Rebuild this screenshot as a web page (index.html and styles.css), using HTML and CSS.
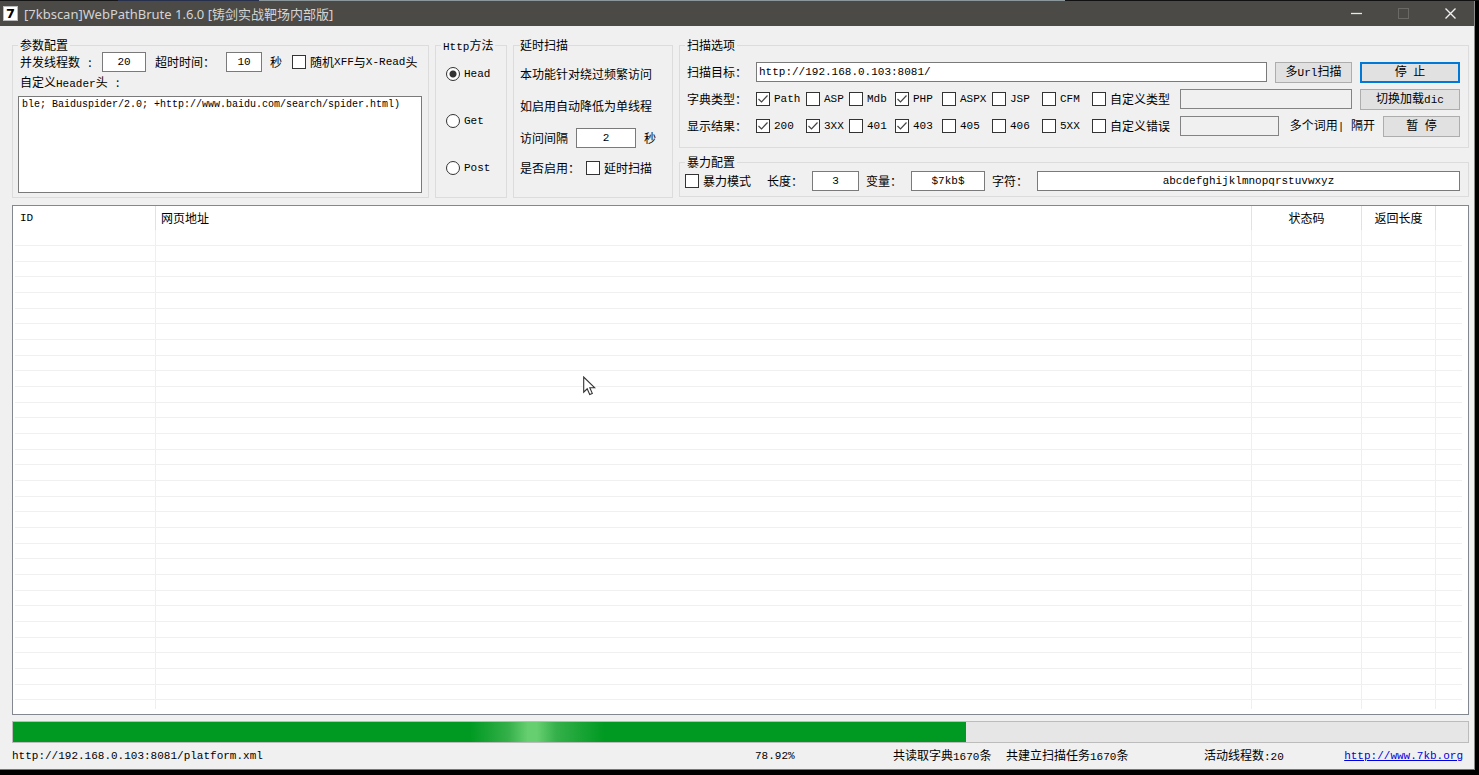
FILE: index.html
```
<!DOCTYPE html>
<html lang="zh-CN">
<head>
<meta charset="utf-8">
<title>[7kbscan]WebPathBrute 1.6.0</title>
<link rel="stylesheet" href="styles.css">
</head>
<body>
<div class="window">
  <header class="titlebar">
    <span class="app-icon">7</span>
    <h1 class="title">[7kbscan]WebPathBrute 1.6.0 [铸剑实战靶场内部版]</h1>
    <button class="win-btn" type="button" aria-label="最小化"><svg width="13" height="13" viewBox="0 0 13 13"><path d="M1 6.5h11" stroke="#e8e8e8" stroke-width="1.3"/></svg></button>
    <button class="win-btn" type="button" aria-label="最大化" disabled><svg width="13" height="13" viewBox="0 0 13 13"><rect x="1.5" y="1.5" width="10" height="10" fill="none" stroke="#6b6966"/></svg></button>
    <button class="win-btn" type="button" aria-label="关闭"><svg width="13" height="13" viewBox="0 0 13 13"><path d="M1.5 1.5l10 10M11.5 1.5l-10 10" stroke="#f0f0f0" stroke-width="1.4"/></svg></button>
  </header>

  <main class="content">
    <form class="panels">
      <fieldset class="group params">
        <legend>参数配置</legend>
        <div class="row">
          <label class="threads-label" for="threads">并发线程数<span class="colon">:</span></label>
          <input class="box threads" id="threads" type="text" value="20">
          <label class="timeout-label" for="timeout">超时时间：</label>
          <input class="box timeout" id="timeout" type="text" value="10">
          <span class="unit">秒</span>
          <label class="check"><input type="checkbox">随机<span class="mono">XFF</span>与<span class="mono">X-Read</span>头</label>
        </div>
        <label class="header-label" for="header">自定义<span class="mono">Header</span>头<span class="colon">:</span></label>
        <textarea class="header-text" id="header" spellcheck="false" wrap="off">ble; Baiduspider/2.0; +http://www.baidu.com/search/spider.html)</textarea>
      </fieldset>

      <fieldset class="group methods">
        <legend><span class="mono">Http</span>方法</legend>
        <label class="check mono"><input type="radio" name="method" checked>Head</label>
        <label class="check mono"><input type="radio" name="method">Get</label>
        <label class="check mono"><input type="radio" name="method">Post</label>
      </fieldset>

      <fieldset class="group delay">
        <legend>延时扫描</legend>
        <p>本功能针对绕过频繁访问</p>
        <p>如启用自动降低为单线程</p>
        <div class="row">
          <label class="interval-label" for="interval">访问间隔</label>
          <input class="box interval" id="interval" type="text" value="2">
          <span class="unit">秒</span>
        </div>
        <div class="row">
          <span class="enable-label">是否启用：</span>
          <label class="check"><input type="checkbox">延时扫描</label>
        </div>
      </fieldset>

      <div class="right">
        <fieldset class="group options">
          <legend>扫描选项</legend>
          <div class="row">
            <label class="name" for="target">扫描目标：</label>
            <input class="box left fill" id="target" type="text" value="http://192.168.0.103:8081/">
            <button class="btn narrow" type="button">多<span class="mono">Url</span>扫描</button>
            <button class="btn primary" type="button">停<span class="mono"> </span>止</button>
          </div>
          <div class="row">
            <span class="name">字典类型：</span>
            <div class="checks">
              <label class="check mono"><input type="checkbox" checked>Path</label>
              <label class="check mono"><input type="checkbox">ASP</label>
              <label class="check mono"><input type="checkbox">Mdb</label>
              <label class="check mono"><input type="checkbox" checked>PHP</label>
              <label class="check mono"><input type="checkbox">ASPX</label>
              <label class="check mono"><input type="checkbox">JSP</label>
              <label class="check mono"><input type="checkbox">CFM</label>
              <label class="check"><input type="checkbox">自定义类型</label>
            </div>
            <input class="box fill" type="text" aria-label="自定义类型" disabled>
            <button class="btn" type="button">切换加载<span class="mono">dic</span></button>
          </div>
          <div class="row">
            <span class="name">显示结果：</span>
            <div class="checks">
              <label class="check mono"><input type="checkbox" checked>200</label>
              <label class="check mono"><input type="checkbox" checked>3XX</label>
              <label class="check mono"><input type="checkbox">401</label>
              <label class="check mono"><input type="checkbox" checked>403</label>
              <label class="check mono"><input type="checkbox">405</label>
              <label class="check mono"><input type="checkbox">406</label>
              <label class="check mono"><input type="checkbox">5XX</label>
              <label class="check"><input type="checkbox">自定义错误</label>
            </div>
            <input class="box fill" type="text" aria-label="自定义错误" disabled>
            <span class="note">多个词用<span class="mono">| </span>隔开</span>
            <button class="btn narrow" type="button">暂<span class="mono"> </span>停</button>
          </div>
        </fieldset>

        <fieldset class="group brute">
          <legend>暴力配置</legend>
          <div class="row">
            <label class="check brute-mode"><input type="checkbox">暴力模式</label>
            <label class="brute-label" for="length">长度：</label>
            <input class="box length" id="length" type="text" value="3">
            <label class="brute-label" for="variable">变量：</label>
            <input class="box variable" id="variable" type="text" value="$7kb$">
            <label class="brute-label" for="chars">字符：</label>
            <input class="box fill" id="chars" type="text" value="abcdefghijklmnopqrstuvwxyz">
          </div>
        </fieldset>
      </div>
    </form>

    <section class="list">
      <table class="results">
        <colgroup><col class="c-id"><col><col class="c-status"><col class="c-length"><col class="c-rest"></colgroup>
        <thead><tr><th class="mono">ID</th><th>网页地址</th><th class="mid">状态码</th><th class="mid">返回长度</th><th></th></tr></thead>
        <tbody>
          <tr><td></td><td></td><td></td><td></td><td></td></tr>
          <tr><td></td><td></td><td></td><td></td><td></td></tr>
          <tr><td></td><td></td><td></td><td></td><td></td></tr>
          <tr><td></td><td></td><td></td><td></td><td></td></tr>
          <tr><td></td><td></td><td></td><td></td><td></td></tr>
          <tr><td></td><td></td><td></td><td></td><td></td></tr>
          <tr><td></td><td></td><td></td><td></td><td></td></tr>
          <tr><td></td><td></td><td></td><td></td><td></td></tr>
          <tr><td></td><td></td><td></td><td></td><td></td></tr>
          <tr><td></td><td></td><td></td><td></td><td></td></tr>
          <tr><td></td><td></td><td></td><td></td><td></td></tr>
          <tr><td></td><td></td><td></td><td></td><td></td></tr>
          <tr><td></td><td></td><td></td><td></td><td></td></tr>
          <tr><td></td><td></td><td></td><td></td><td></td></tr>
          <tr><td></td><td></td><td></td><td></td><td></td></tr>
          <tr><td></td><td></td><td></td><td></td><td></td></tr>
          <tr><td></td><td></td><td></td><td></td><td></td></tr>
          <tr><td></td><td></td><td></td><td></td><td></td></tr>
          <tr><td></td><td></td><td></td><td></td><td></td></tr>
          <tr><td></td><td></td><td></td><td></td><td></td></tr>
          <tr><td></td><td></td><td></td><td></td><td></td></tr>
          <tr><td></td><td></td><td></td><td></td><td></td></tr>
          <tr><td></td><td></td><td></td><td></td><td></td></tr>
          <tr><td></td><td></td><td></td><td></td><td></td></tr>
          <tr><td></td><td></td><td></td><td></td><td></td></tr>
          <tr><td></td><td></td><td></td><td></td><td></td></tr>
          <tr><td></td><td></td><td></td><td></td><td></td></tr>
          <tr><td></td><td></td><td></td><td></td><td></td></tr>
          <tr><td></td><td></td><td></td><td></td><td></td></tr>
          <tr><td></td><td></td><td></td><td></td><td></td></tr>
          <tr class="tail"><td></td><td></td><td></td><td></td><td></td></tr>
        </tbody>
      </table>
    </section>

    <div class="progress" role="progressbar" aria-label="扫描进度"><div class="bar" style="width:65.5%"></div></div>

    <footer class="status">
      <span class="mono">http://192.168.0.103:8081/platform.xml</span>
      <span class="mono">78.92%</span>
      <span>共读取字典<span class="mono">1670</span>条</span>
      <span>共建立扫描任务<span class="mono">1670</span>条</span>
      <span>活动线程数<span class="mono">:20</span></span>
      <a class="mono" href="#">http://www.7kb.org</a>
    </footer>
  </main>
  <svg class="cursor" width="13" height="20" viewBox="0 0 13 20"><path d="M.7 1v15.2l3.5-3.4 2.5 5.7 2.6-1.1-2.5-5.6h5z" fill="#fff" stroke="#333" stroke-width="1.1"/></svg>
</div>
</body>
</html>
```

FILE: styles.css
```
* { box-sizing: border-box; }

body {
  margin: 0;
  height: 100vh;
  padding: 1px 4px 5px 0;
  display: flex;
  background: linear-gradient(90deg, #151515 8%, #26304d 8% 17.5%, #8b979b 17.5% 72%, #111 72%) 0 0 / 100% 1px no-repeat #000;
  color: #000;
  font: 12px/14px "Noto Sans CJK SC", sans-serif;
}

.mono { font-family: "Liberation Mono", "Noto Sans CJK SC", monospace; font-size: 11px; white-space: pre; }

.window {
  position: relative;
  flex: 1;
  min-width: 0;
  display: flex;
  flex-direction: column;
  background: #f0f0f0;
  border-right: 1px solid #8b8b8b;
  border-bottom: 1px solid #777;
}

.titlebar { display: flex; align-items: center; height: 25px; padding-left: 3px; background: #4b4a47; }
.app-icon {
  width: 15px;
  height: 15px;
  margin-right: 6px;
  background: #fff;
  border: 1px solid #bbb;
  font: bold 13px/13px "DejaVu Sans", sans-serif;
  text-align: center;
}
.title { flex: 1; margin: 0; color: #d4d4d4; font: 13px/16px "Noto Sans", "Noto Sans CJK SC", sans-serif; }
.win-btn { display: flex; align-items: center; justify-content: center; width: 47px; height: 25px; padding: 0; border: 0; background: none; }

.content { flex: 1; min-height: 0; display: flex; flex-direction: column; padding: 12px 5px 0 12px; }

.panels { display: flex; gap: 6px; }
.group {
  display: flex;
  flex-direction: column;
  min-width: 0;
  margin: 0;
  padding: 0 6px 4px 5px;
  border: 1px solid #dcdcdc;
  white-space: nowrap;
}
.group legend { height: 14px; padding: 0 2px; }
.row { display: flex; align-items: center; height: 20px; }
.right { flex: 1; min-width: 0; display: flex; flex-direction: column; gap: 7px; }

.box {
  width: 44px;
  height: 20px;
  min-width: 0;
  margin: 0;
  padding: 0 2px;
  border: 1px solid #7a7a7a;
  border-radius: 0;
  background: #fff;
  color: #000;
  font: 11px/14px "Liberation Mono", monospace;
  text-align: center;
}
.box.left { text-align: left; }
.box:disabled { background: #f0f0f0; border-color: #838383; }
.fill { flex: 1; width: 0; }

.check { display: flex; align-items: center; }
input[type="checkbox"], input[type="radio"] {
  appearance: none;
  flex: none;
  width: 14px;
  height: 14px;
  margin: 0 4px 0 0;
  border: 1px solid #333;
  background: #fff;
}
input[type="radio"] { border-radius: 50%; }
input[type="radio"]:checked { background: radial-gradient(circle, #333 0 3px, #fff 4px); }
input[type="checkbox"]:checked {
  background: url("data:image/svg+xml,%3Csvg xmlns='http://www.w3.org/2000/svg' viewBox='0 0 12 12'%3E%3Cpath d='M1.5 6l3 3 6-6.5' fill='none' stroke='%23444' stroke-width='1.2'/%3E%3C/svg%3E") #fff;
}

.btn {
  width: 100px;
  height: 21px;
  margin-left: 8px;
  padding: 0;
  border: 1px solid #adadad;
  background: #e1e1e1;
  color: #000;
  font: 12px/14px "Noto Sans CJK SC", sans-serif;
  white-space: pre;
}
.btn.narrow { width: 77px; }
.btn.primary { border: 2px solid #0078d7; }

.params { width: 417px; }
.threads-label, .header-label { padding-left: 2px; }
.threads-label { width: 84px; }
.timeout-label { width: 80px; padding-left: 9px; }
.colon { display: inline-block; width: 20px; text-align: center; }
.timeout { width: 36px; }
.unit { padding: 0 10px 0 8px; }
.header-label { margin: 3px 0 5px; }
.header-text {
  height: 97px;
  margin: 0;
  padding: 2px 3px;
  border: 1px solid #7a7a7a;
  background: #fff;
  color: #000;
  font: 10px/12px "Liberation Mono", monospace;
  resize: none;
  overflow: hidden;
}

.methods { width: 72px; gap: 27px; }
.methods .check { height: 20px; padding-left: 5px; }
.methods legend + .check { margin-top: 12px; }

.delay { width: 160px; padding: 0 6px 0 6px; }
.delay legend { padding: 0; }
.delay p { margin: 0; line-height: 32px; }
.delay legend + p { margin-top: 6px; }
.delay .row { height: 32px; }
.delay .row + .row { height: 28px; }
.interval-label { width: 57px; }
.interval { width: 61px; }
.enable-label { width: 66px; }

.options { gap: 7px; padding: 10px 8px 11px 5px; }
.options .name { width: 71px; padding-left: 2px; }
.checks { display: grid; grid-template-columns: 50px 43px 46px 47px 50px 50px 50px 88px; align-items: center; }
.note { padding: 0 0 0 11px; }

.brute { padding: 2px 8px 5px 5px; }
.brute-mode { width: 82px; }
.brute-label { width: 45px; }
.variable { width: 74px; }
.length { width: 47px; }
.variable, .length { margin-right: 7px; }

.list { flex: 1; min-height: 0; margin: 7px 0 6px; padding: 0 6px 0 2px; overflow: hidden; border: 1px solid #828790; background: #fff; }
.results { width: 100%; table-layout: fixed; border-spacing: 0; }
.c-id { width: 141px; }
.c-status { width: 110px; }
.c-length { width: 74px; }
.c-rest { width: 26px; }
.results th { height: 24px; padding: 0 5px; border-right: 1px solid #e2e2e2; font-weight: normal; text-align: left; }
.results th.mid { text-align: center; }
.results td { height: 16px; padding: 0; border-right: 1px solid #efefef; border-bottom: 1px solid #f0f0f0; }
.results tr:nth-child(3n) td { height: 15px; }
.results .tail td { height: 9px; border-bottom: 0; }
.results th:last-child, .results td:last-child { border-right: 0; }

.progress { height: 22px; border: 1px solid #bcbcbc; background: #e6e6e6; }
.bar { height: 100%; background: linear-gradient(90deg, transparent 48%, #35b04a 52%, #66cf70 54% 55%, #35b04a 57%, transparent 62%) #009a22; }

.status { display: grid; grid-template-columns: 743px 138px 113px 198px 1fr auto; align-items: center; height: 26px; padding-right: 6px; white-space: nowrap; }
.status a { color: #0000e0; }

.cursor { position: absolute; left: 583px; top: 375px; }
```
